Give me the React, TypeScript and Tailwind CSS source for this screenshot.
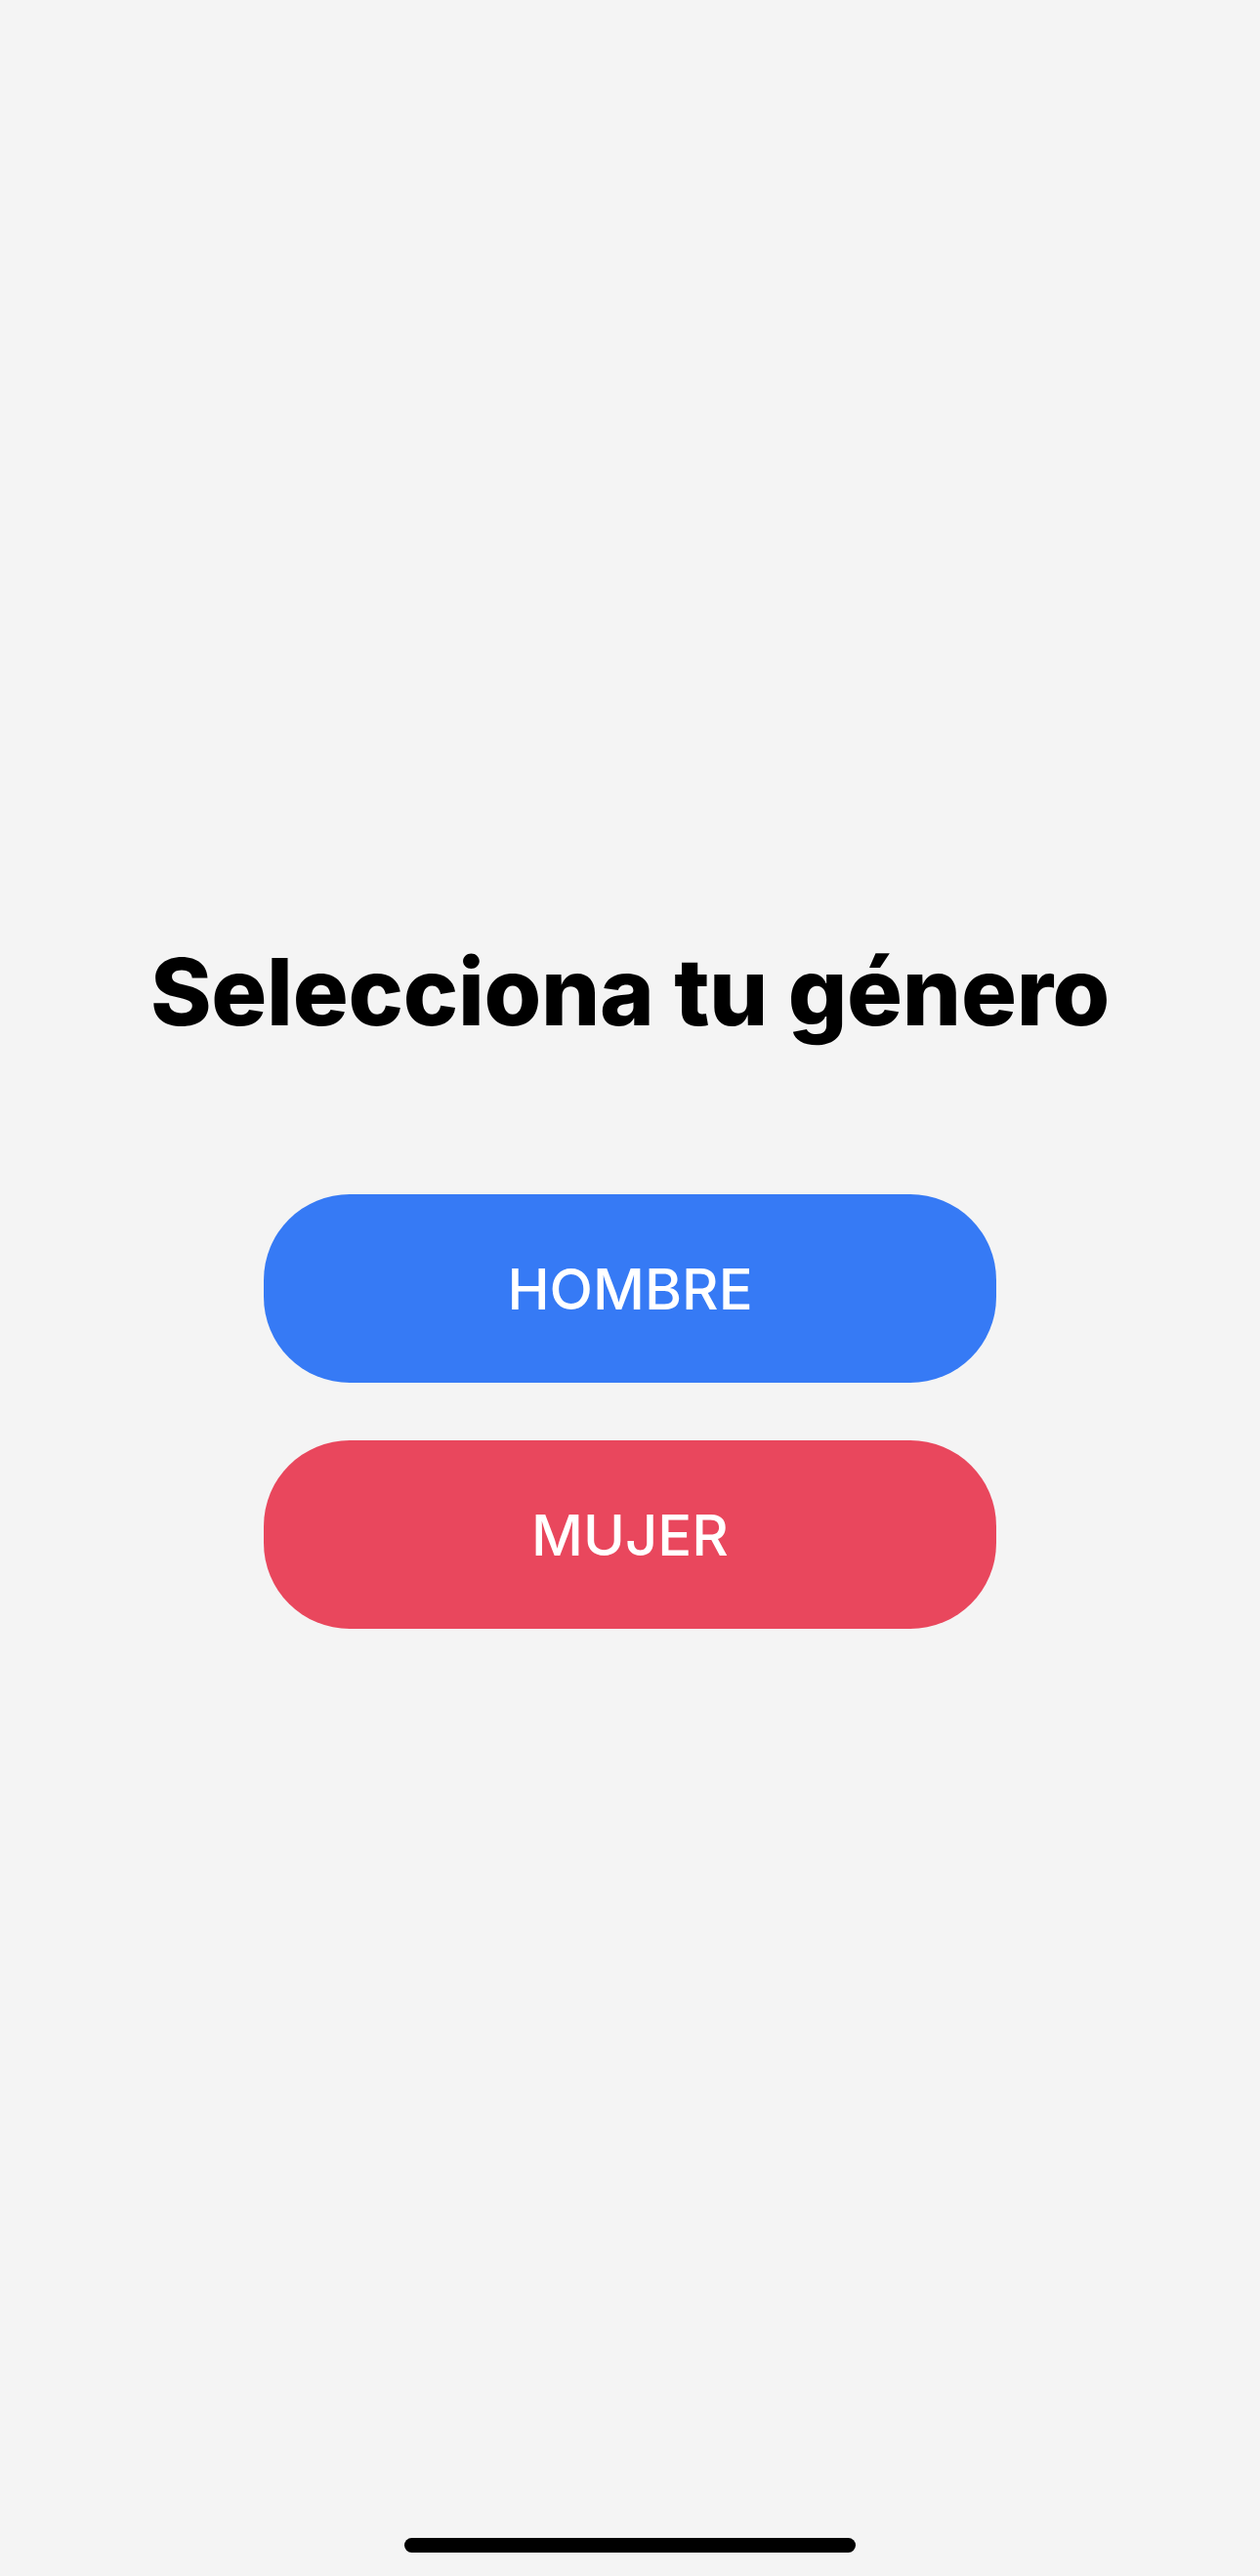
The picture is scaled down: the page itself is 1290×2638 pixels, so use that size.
import React from 'react';

type Gender = 'hombre' | 'mujer';

const options: { id: Gender; label: string; className: string }[] = [
    { id: 'hombre', label: 'HOMBRE', className: 'bg-[#367af5]' },
    { id: 'mujer', label: 'MUJER', className: 'bg-[#e9475d]' },
];

export default function App() {
    const handleSelect = (gender: Gender) => {
        console.log('selected', gender);
    };

    return (
        <div
            className="flex h-[2638px] w-full flex-col items-center bg-[#f4f4f4] text-black"
            style={{ fontFamily: 'Inter, "Noto Sans", sans-serif' }}
        >
            {/* Title */}
            <h1 className="mt-[968px] text-[95px] font-extrabold leading-none tracking-[-0.3px]">
                Selecciona tu género
            </h1>

            {/* Options */}
            <div className="mt-[160px] flex w-[750px] flex-col gap-[59px]">
                {options.map(opt => (
                    <button
                        key={opt.id}
                        onClick={() => handleSelect(opt.id)}
                        className={`flex h-[193px] w-full items-center justify-center rounded-[88px] text-[58px] font-medium leading-none text-white ${opt.className}`}
                    >
                        {opt.label}
                    </button>
                ))}
            </div>

            <div className="flex-1" />

            {/* Home indicator */}
            <div className="mb-[24px] h-[15px] w-[462px] rounded-full bg-black" />
        </div>
    );
}
